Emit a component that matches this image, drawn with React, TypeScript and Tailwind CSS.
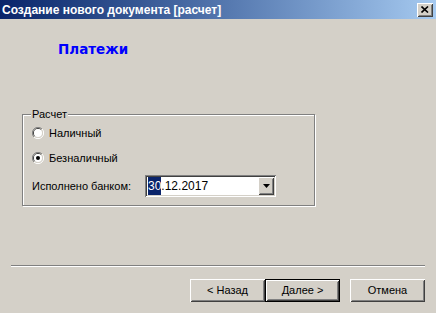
const raised =
  'shadow-[inset_1px_1px_0_#ffffff,inset_-1px_-1px_0_#404040,inset_2px_2px_0_#d4d0c8,inset_-2px_-2px_0_#808080]';

function Radio({ checked }: { checked?: boolean }) {
  return (
    <svg width="12" height="12" viewBox="0 0 12 12" className="shrink-0">
      <path d="M10 2 A5.5 5.5 0 0 0 2 10" fill="none" stroke="#808080" strokeWidth="1" />
      <path d="M9.2 2.8 A4.5 4.5 0 0 0 2.8 9.2" fill="none" stroke="#404040" strokeWidth="1" />
      <path d="M2 10 A5.5 5.5 0 0 0 10 2" fill="none" stroke="#ffffff" strokeWidth="1" />
      <path d="M2.8 9.2 A4.5 4.5 0 0 0 9.2 2.8" fill="none" stroke="#d4d0c8" strokeWidth="1" />
      <circle cx="6" cy="6" r="4" fill="#ffffff" />
      {checked && <circle cx="6" cy="6" r="2" fill="#000000" />}
    </svg>
  );
}

function Button({ label, isDefault }: { label: string; isDefault?: boolean }) {
  if (isDefault) {
    return (
      <div className="h-[23px] w-[75px] border border-black">
        <div className={`flex h-full w-full items-center justify-center bg-[#d4d0c8] ${raised}`}>
          {label}
        </div>
      </div>
    );
  }
  return (
    <div className={`flex h-[23px] w-[75px] items-center justify-center bg-[#d4d0c8] ${raised}`}>
      {label}
    </div>
  );
}

export default function App() {
  return (
    <div
      className="flex h-[313px] w-[436px] flex-col overflow-hidden bg-[#d4d0c8] text-[11px] text-black"
      style={{ fontFamily: '"Liberation Sans", Arial, sans-serif' }}
    >
      <div className="flex h-[19px] shrink-0 items-center justify-between bg-gradient-to-r from-[#0a246a] to-[#a6caf0] pl-[2px] pr-[3px]">
        <span className="text-[12px] font-bold leading-none text-white">
          Создание нового документа [расчет]
        </span>
        <div className={`flex h-[14px] w-[16px] items-center justify-center bg-[#d4d0c8] ${raised}`}>
          <svg width="8" height="7" viewBox="0 0 8 7">
            <path d="M0.5 0.5 L7 6.5 M7 0.5 L0.5 6.5" stroke="#000" strokeWidth="1.6" />
          </svg>
        </div>
      </div>

      <div
        className="ml-[58px] mt-[22px] h-[17px] text-[13.5px] font-bold leading-[17px] text-[#0000ff]"
        style={{ fontFamily: '"DejaVu Sans", sans-serif' }}
      >
        Платежи
      </div>

      <div className="relative ml-[22px] mt-[56px] w-[293px] border border-[#808080] pb-[8px] pl-[9px] pt-[10px] shadow-[inset_1px_1px_0_#ffffff,1px_1px_0_#ffffff]">
        <span className="absolute left-[8px] top-[-7px] bg-[#d4d0c8] px-[1px] leading-[13px]">Расчет</span>
        <div className="flex h-[16px] items-center gap-[5px]">
          <Radio />
          <span>Наличный</span>
        </div>
        <div className="mt-[9px] flex h-[16px] items-center gap-[5px]">
          <Radio checked />
          <span>Безналичный</span>
        </div>
        <div className="mt-[9px] flex h-[22px] items-center">
          <span className="w-[113px]">Исполнено банком:</span>
          <div className="flex h-[22px] w-[131px] bg-white p-[2px] shadow-[inset_1px_1px_0_#808080,inset_-1px_-1px_0_#ffffff,inset_2px_2px_0_#404040,inset_-2px_-2px_0_#d4d0c8]">
            <div className="flex flex-1 items-center pl-[1px] text-[12px]">
              <span className="bg-[#0a246a] text-white">30</span>
              <span>.12.2017</span>
            </div>
            <div className={`flex h-[18px] w-[16px] items-center justify-center bg-[#d4d0c8] ${raised}`}>
              <svg width="7" height="4" viewBox="0 0 7 4">
                <path d="M0 0 H7 L3.5 4 Z" fill="#000" />
              </svg>
            </div>
          </div>
        </div>
      </div>

      <div className="ml-[11px] mt-[59px] h-[2px] w-[414px] border-t border-b border-t-[#808080] border-b-white" />

      <div className="mt-[12px] flex">
        <div className="ml-[190px] flex">
          <Button label="< Назад" />
          <Button label="Далее >" isDefault />
        </div>
        <div className="ml-[10px]">
          <Button label="Отмена" />
        </div>
      </div>
    </div>
  );
}
